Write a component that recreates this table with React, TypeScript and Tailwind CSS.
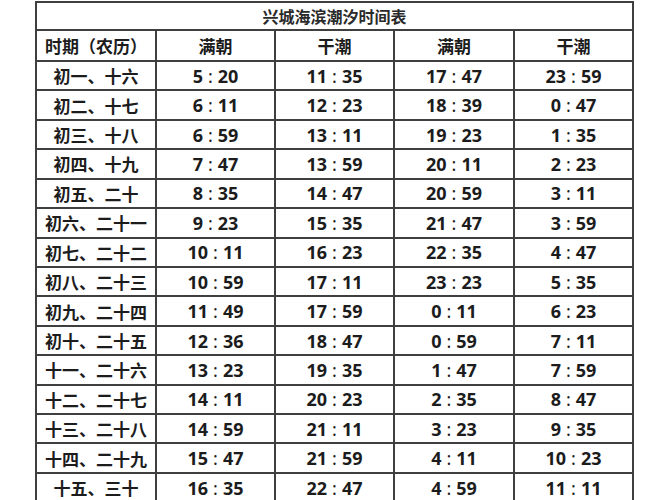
import React from 'react';

const rows: [string, string, string, string, string][] = [
  ['初一、十六', '5:20', '11:35', '17:47', '23:59'],
  ['初二、十七', '6:11', '12:23', '18:39', '0:47'],
  ['初三、十八', '6:59', '13:11', '19:23', '1:35'],
  ['初四、十九', '7:47', '13:59', '20:11', '2:23'],
  ['初五、二十', '8:35', '14:47', '20:59', '3:11'],
  ['初六、二十一', '9:23', '15:35', '21:47', '3:59'],
  ['初七、二十二', '10:11', '16:23', '22:35', '4:47'],
  ['初八、二十三', '10:59', '17:11', '23:23', '5:35'],
  ['初九、二十四', '11:49', '17:59', '0:11', '6:23'],
  ['初十、二十五', '12:36', '18:47', '0:59', '7:11'],
  ['十一、二十六', '13:23', '19:35', '1:47', '7:59'],
  ['十二、二十七', '14:11', '20:23', '2:35', '8:47'],
  ['十三、二十八', '14:59', '21:11', '3:23', '9:35'],
  ['十四、二十九', '15:47', '21:59', '4:11', '10:23'],
  ['十五、三十', '16:35', '22:47', '4:59', '11:11'],
];

const headers = ['时期（农历）', '满朝', '干潮', '满朝', '干潮'];

function Time({ value }: { value: string }) {
  const [h, m] = value.split(':');
  return (
    <span className="text-[18px] font-bold" style={{ fontFamily: '"Noto Sans", "Open Sans", sans-serif' }}>
      {h}
      <span className="mx-[5px] font-normal">:</span>
      {m}
    </span>
  );
}

export default function App() {
  return (
    <div
      className="w-[670px] h-[500px] overflow-hidden bg-white pl-[35px] pt-[1px]"
      style={{ fontFamily: '"Noto Sans CJK SC", "Liberation Sans", sans-serif' }}
    >
      <div className="w-[599px] grid grid-cols-[118px_117px_117px_118px_117px] auto-rows-[27.43px] grid-rows-[26px_29px] gap-[2px] p-[2px] bg-[#3f3f3f] text-[#1c1c1c] font-bold text-[17px]">
        <div className="col-span-5 bg-white flex items-center justify-center text-[16px] text-[#2a2a2a]">
          兴城海滨潮汐时间表
        </div>
        {headers.map((h, i) => (
          <div key={'h' + i} className="bg-white flex items-center justify-center">
            {h}
          </div>
        ))}
        {rows.map((r) =>
          r.map((c, j) => (
            <div key={r[0] + j} className="bg-white flex items-center justify-center leading-none">
              {j === 0 ? c : <Time value={c} />}
            </div>
          ))
        )}
      </div>
    </div>
  );
}
